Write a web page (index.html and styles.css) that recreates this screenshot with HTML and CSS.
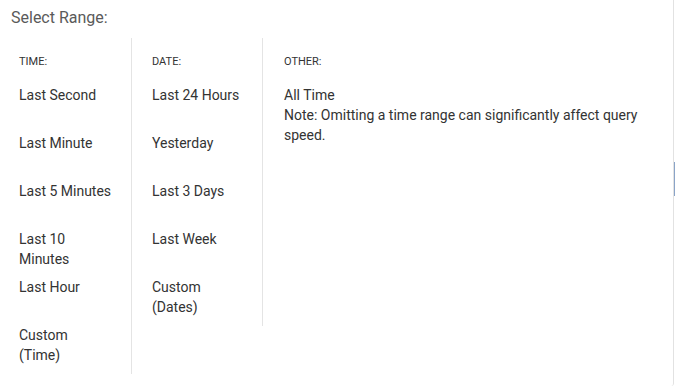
FILE: index.html
```html
<!DOCTYPE html>
<html lang="en">
<head>
  <meta charset="UTF-8">
  <meta name="viewport" content="width=device-width, initial-scale=1">
  <title>Select Range</title>
  <link rel="stylesheet" href="styles.css">
</head>
<body>
  <div class="dialogo">
    <div class="titulo">Select Range:</div>

    <div class="colunas">
      <div class="coluna coluna-tempo">
        <div class="cabecalho">TIME:</div>
        <div class="item">Last Second</div>
        <div class="item">Last Minute</div>
        <div class="item">Last 5 Minutes</div>
        <div class="item">Last 10 Minutes</div>
        <div class="item">Last Hour</div>
        <div class="item">Custom (Time)</div>
      </div>

      <div class="coluna coluna-data">
        <div class="cabecalho">DATE:</div>
        <div class="item">Last 24 Hours</div>
        <div class="item">Yesterday</div>
        <div class="item">Last 3 Days</div>
        <div class="item">Last Week</div>
        <div class="item">Custom (Dates)</div>
      </div>

      <div class="coluna coluna-outro">
        <div class="cabecalho">OTHER:</div>
        <div class="outro-texto">
          <div>All Time</div>
          <div>Note: Omitting a time range can significantly affect query speed.</div>
        </div>
      </div>
    </div>
  </div>
  <div class="barra-azul"></div>
</body>
</html>
```

FILE: styles.css
```css
body {
  margin: 0;
  background-color: #fff;
  font-family: Roboto, "Liberation Sans", Arial, sans-serif;
  color: #333;
  position: relative;
}
.dialogo {
  width: 673px;
  height: 386px;
  border-right: 1px solid #e2e2e2;
  border-bottom-right-radius: 3px;
  box-sizing: content-box;
}
.titulo {
  font-size: 16px;
  line-height: 20px;
  color: #5a5a5a;
  padding: 8px 0 0 11px;
  height: 30px;
}
.colunas {
  display: flex;
  align-items: flex-start;
}
.coluna {
  padding-top: 16px;
  padding-bottom: 5px;
  box-sizing: border-box;
}
.coluna-tempo {
  width: 132px;
  padding-left: 19px;
  padding-right: 19.4px;
  border-right: 1px solid #e4e4e4;
}
.coluna-data {
  width: 131px;
  padding-left: 20px;
  padding-right: 18px;
  border-right: 1px solid #e4e4e4;
}
.coluna-outro {
  width: 400px;
  padding-left: 21px;
  padding-right: 9px;
}
.cabecalho {
  font-size: 11px;
  line-height: 16px;
  margin-bottom: 11px;
  color: #333;
}
.item {
  height: 48px;
  padding-top: 4px;
  box-sizing: border-box;
  font-size: 14px;
  line-height: 20px;
  cursor: pointer;
}
.outro-texto {
  padding-top: 4px;
  font-size: 14px;
  line-height: 20px;
}
.barra-azul {
  position: absolute;
  left: 674px;
  top: 162px;
  width: 1px;
  height: 34px;
  background-color: #8aa4c8;
}
```
